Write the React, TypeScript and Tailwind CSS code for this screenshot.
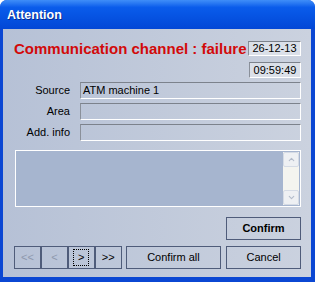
import { ChevronUp, ChevronDown } from 'lucide-react';

const font = "font-['Liberation_Sans',Arial,sans-serif]";

function Sunken({ children, className = '' }: { children?: React.ReactNode; className?: string }) {
  return (
    <div
      className={`flex items-center border-t border-l border-t-[#7c828c] border-l-[#8a909a] border-b border-r border-b-white border-r-white ${className}`}
    >
      {children}
    </div>
  );
}

function Field({ label, value }: { label: string; value?: string }) {
  return (
    <div className="flex items-center h-[17px]">
      <span className="w-[56px] text-right text-[11px] text-black whitespace-nowrap">{label}</span>
      <Sunken className="ml-[10px] flex-1 h-[17px] px-[2px] text-[11px] text-black">{value}</Sunken>
    </div>
  );
}

function Btn({
  children,
  className = '',
  dim = false,
}: {
  children: React.ReactNode;
  className?: string;
  dim?: boolean;
}) {
  return (
    <button
      className={`h-[23px] flex items-center justify-center border border-[#4f5c7a] text-[11px] ${
        dim ? 'text-[#8e98ad]' : 'text-black'
      } ${className}`}
    >
      {children}
    </button>
  );
}

export default function App() {
  return (
    <div className={`w-[315px] h-[282px] bg-white ${font}`}>
      <div className="w-full h-full flex flex-col bg-[#0b47d3] rounded-t-[7px] overflow-hidden">
        {/* title bar */}
        <div className="h-[29px] shrink-0 flex items-center pl-[7px] pt-[1px] bg-linear-to-b from-[#3f8ef8] via-[#0a5ceb] via-25% to-[#0347d6]">
          <span className="text-[12.5px] font-bold text-white [text-shadow:1px_1px_#0b2a8a]">Attention</span>
        </div>

        {/* client area */}
        <div className="ml-[3px] mr-[4px] mb-[5px] flex-1 flex flex-col pl-[11px] pr-[10px] bg-linear-to-r from-[#b6c1d6] to-[#cbd2df]">
          <div className="mt-[12px] flex items-center justify-between h-[15px]">
            <span className="text-[15px] font-bold text-[#d20a0a] leading-none whitespace-nowrap">Communication channel : failure</span>
            <Sunken className="w-[53px] h-[15px] bg-[#dbe0e9] justify-center text-[11px] text-black">26-12-13</Sunken>
          </div>
          <div className="mt-[6px] flex justify-end">
            <Sunken className="w-[52px] h-[16px] bg-[#dbe0e9] justify-center text-[11px] text-black">09:59:49</Sunken>
          </div>

          <div className="mt-[4px] flex flex-col gap-[4px]">
            <Field label="Source" value="ATM machine 1" />
            <Field label="Area" />
            <Field label="Add. info" />
          </div>

          {/* memo */}
          <div className="mt-[9px] ml-[1px] h-[57px] border border-white bg-[#a6b5cf] flex justify-end p-[1px]">
            <div className="w-[16px] h-full bg-[#f4f4ef] flex flex-col justify-between">
              <div className="h-[15px] rounded-[2px] border border-[#d5dbe5] bg-[#eef0f3] flex items-center justify-center">
                <ChevronUp className="w-[9px] h-[9px] text-[#b4bccb]" strokeWidth={3} />
              </div>
              <div className="h-[15px] rounded-[2px] border border-[#d5dbe5] bg-[#eef0f3] flex items-center justify-center">
                <ChevronDown className="w-[9px] h-[9px] text-[#b4bccb]" strokeWidth={3} />
              </div>
            </div>
          </div>

          <div className="mt-[10px] flex justify-end">
            <Btn className="w-[75px] font-bold">Confirm</Btn>
          </div>

          <div className="mt-[6px] flex items-center">
            <Btn className="w-[27px]" dim>&lt;&lt;</Btn>
            <Btn className="w-[27px]" dim>&lt;</Btn>
            <Btn className="w-[27px]">
              <span className="w-[16px] h-[17px] flex items-center justify-center border border-dotted border-black">&gt;</span>
            </Btn>
            <Btn className="w-[27px]">&gt;&gt;</Btn>
            <Btn className="ml-[4px] w-[96px]">Confirm all</Btn>
            <Btn className="ml-[5px] w-[75px]">Cancel</Btn>
          </div>
        </div>
      </div>
    </div>
  );
}
